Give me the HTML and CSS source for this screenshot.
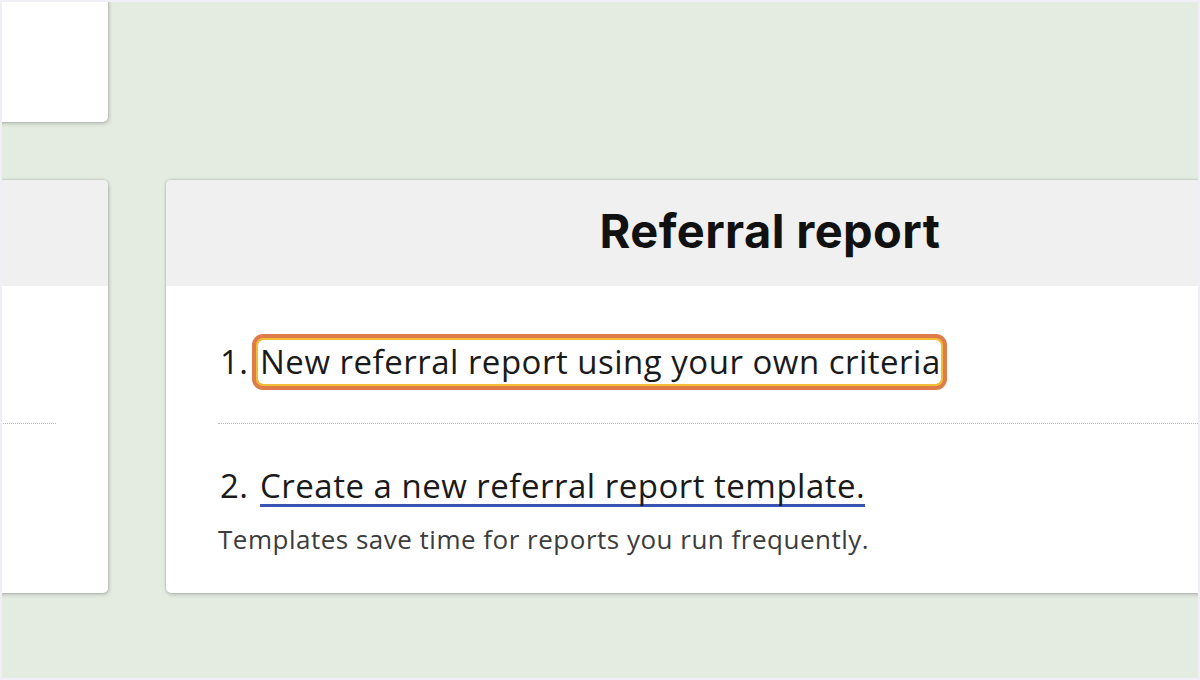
FILE: index.html
```html
<!DOCTYPE html>
<html>
<head>
<meta charset="utf-8">
<link rel="stylesheet" href="styles.css">
</head>
<body>
<div class="frame">
  <div class="stage">
    <div class="card card-top"></div>
    <div class="spacer"></div>
    <div class="card card-side">
      <div class="card-head"></div>
      <div class="card-body">
        <div class="side-sep"></div>
      </div>
    </div>
    <div class="card card-main">
      <div class="card-head">
        <h1 class="title">Referral report</h1>
      </div>
      <div class="card-body">
        <div class="option option-one">
          <span class="num">1.</span>
          <a class="link focused" href="#">New referral report using your own criteria</a>
        </div>
        <div class="sep"></div>
        <div class="option option-two">
          <span class="num">2.</span>
          <a class="link underlined" href="#">Create a new referral report template.</a>
        </div>
        <p class="desc">Templates save time for reports you run frequently.</p>
      </div>
    </div>
  </div>
</div>
</body>
</html>
```
FILE: styles.css
```css
html, body {
  margin: 0;
  padding: 0;
}
body {
  width: 1200px;
  height: 680px;
  overflow: hidden;
  font-family: "Open Sans", "Liberation Sans", sans-serif;
  color: #1a1a1a;
}
.frame {
  box-sizing: border-box;
  width: 1200px;
  height: 680px;
  padding: 2px;
  background: #f0eff5;
}
.stage {
  width: 1196px;
  height: 676px;
  background: #e4ece2;
  overflow: hidden;
  display: grid;
  grid-template-columns: 106px 1208px;
  grid-template-rows: 120px 413px;
  column-gap: 58px;
  row-gap: 58px;
}
.card {
  background: #fff;
  border-radius: 5px;
  box-shadow: 0 0 3px rgba(0, 0, 0, 0.25), 1px 2px 4px rgba(0, 0, 0, 0.14);
  overflow: hidden;
}
.card-top {
  margin-top: -12px;
  margin-left: -20px;
}
.card-side {
  margin-left: -20px;
}
.card-head {
  height: 106px;
  background: #f0f0f0;
  display: flex;
  align-items: center;
  justify-content: center;
}
.card-body {
  padding: 0 52px;
}
.side-sep {
  margin-top: 137px;
  border-top: 1px dotted #b8b8b8;
  margin-left: -40px;
}
.title {
  margin: 0;
  font-family: "Inter", "Liberation Sans", sans-serif;
  font-weight: 700;
  font-size: 47px;
  color: #111;
  letter-spacing: 0.4px;
  padding-bottom: 6px;
}
.option {
  display: flex;
  align-items: baseline;
  font-size: 33px;
  letter-spacing: 0.5px;
  line-height: 44px;
}
.option-one {
  margin-top: 54px;
}
.num {
  width: 40px;
  padding-left: 2px;
  box-sizing: border-box;
}
.link {
  color: #1a1a1a;
  text-decoration: none;
}
.focused {
  border-radius: 5px;
  padding: 0 0 0 2px;
  box-shadow: 0 0 0 2px #f0bd35, 0 0 0 6px #e07b4a;
}
.sep {
  margin-top: 39px;
  border-top: 1px dotted #b8b8b8;
}
.option-two {
  margin-top: 40px;
}
.underlined {
  margin-left: 2px;
  border-bottom: 3px solid #3a54b4;
  line-height: 36px;
}
.desc {
  margin: 13px 0 0;
  font-size: 26px;
  letter-spacing: 0.5px;
  color: #3c3c3c;
}
```
